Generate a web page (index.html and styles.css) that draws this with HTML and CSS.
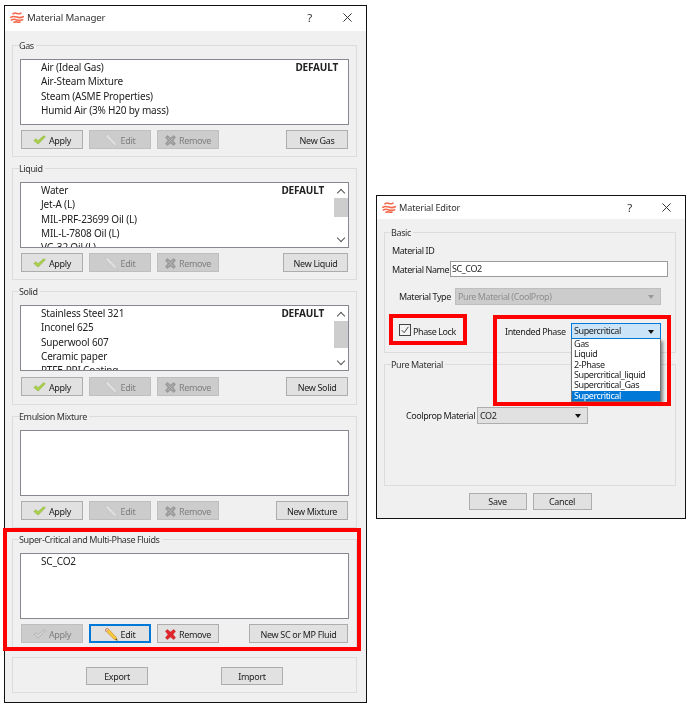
FILE: index.html
```html
<!DOCTYPE html>
<html lang="en">
<head>
<meta charset="utf-8">
<title>Material Manager</title>
<link rel="stylesheet" href="styles.css">
</head>
<body>
<svg class="defs" width="0" height="0" aria-hidden="true">
  <defs>
    <symbol id="logo" viewBox="0 0 14 11">
      <g fill="none" stroke="#f4694c" stroke-width="1.6" stroke-linecap="round">
        <path d="M3 1.8c1.5-1.2 2.5-1 4-.4s2.6.7 4-.3"/>
        <path d="M.8 5.3c2-1.3 3.6-1.1 6-.2s4 .8 6.4-.4"/>
        <path d="M1.4 8c1.8-1 3.4-.9 5.4-.1s3.8.6 5.8-.2"/>
        <path d="M4 10.2c1-.5 2-.4 3-.1s2 .3 3-.1"/>
      </g>
    </symbol>
    <symbol id="tick" viewBox="0 0 16 12">
      <path d="M1 6.5l2.8-2 2.4 2.4L13 .8l2.2 1.2L6.4 11z" fill="#a8d048" stroke="#8fb33a" stroke-width=".7"/>
    </symbol>
    <symbol id="tick-off" viewBox="0 0 16 12">
      <path d="M1 6.5l2.8-2 2.4 2.4L13 .8l2.2 1.2L6.4 11z" fill="#d2d2d2" stroke="#a8a8a8" stroke-width=".8"/>
    </symbol>
    <symbol id="pencil" viewBox="0 0 14 14">
      <path d="M1 1l2-.6 9 9.4 1.4 3.6-3.6-1.4L.6 3z" fill="#f7c83c" stroke="#c98a24" stroke-width=".6"/>
      <path d="M.6 3L1 1l2-.6 1 1-3 2.6z" fill="#e8e2da" stroke="#a33" stroke-width=".4"/>
      <path d="M12 11.4l1.4 2-2.2-.8z" fill="#333"/>
    </symbol>
    <symbol id="pencil-off" viewBox="0 0 14 14">
      <path d="M1 1l2-.6 9 9.4 1.4 3.6-3.6-1.4L.6 3z" fill="#dedede" stroke="#b4b4b4" stroke-width=".5"/>
    </symbol>
    <symbol id="cross" viewBox="0 0 12 12">
      <path d="M.5 2.5L2.5.5 6 3.2 9.5.5l2 2L8.8 6l2.7 3.5-2 2L6 8.8l-3.5 2.7-2-2L3.2 6z" fill="#e0262c" stroke="#c31e22" stroke-width=".5"/>
    </symbol>
    <symbol id="cross-off" viewBox="0 0 12 12">
      <path d="M.5 2.5L2.5.5 6 3.2 9.5.5l2 2L8.8 6l2.7 3.5-2 2L6 8.8l-3.5 2.7-2-2L3.2 6z" fill="#9c9c9c" stroke="#8a8a8a" stroke-width=".5"/>
      <path d="M3 3l6 6M9 3L3 9" stroke="#bdbdbd" stroke-width=".8"/>
    </symbol>
  </defs>
</svg>

<section class="window manager">
  <header class="titlebar">
    <svg class="logo"><use href="#logo"/></svg>
    <span class="title">Material Manager</span>
    <span class="help">?</span>
    <svg class="close" viewBox="0 0 10 10"><path d="M.5.5l9 9M9.5.5l-9 9"/></svg>
  </header>
  <div class="manager-body">
    <fieldset class="group">
      <legend>Gas</legend>
      <div class="list">
        <ul class="items">
          <li><span>Air (Ideal Gas)</span><b>DEFAULT</b></li>
          <li>Air-Steam Mixture</li>
          <li>Steam (ASME Properties)</li>
          <li>Humid Air (3% H20 by mass)</li>
        </ul>
      </div>
      <div class="actions">
        <button class="btn icon-btn"><svg class="i-tick"><use href="#tick"/></svg>Apply</button>
        <button class="btn icon-btn off"><svg class="i-pencil"><use href="#pencil-off"/></svg>Edit</button>
        <button class="btn icon-btn off"><svg class="i-cross"><use href="#cross-off"/></svg>Remove</button>
        <button class="btn new w-gas">New Gas</button>
      </div>
    </fieldset>
    <fieldset class="group">
      <legend>Liquid</legend>
      <div class="list">
        <ul class="items">
          <li><span>Water</span><b>DEFAULT</b></li>
          <li>Jet-A (L)</li>
          <li>MIL-PRF-23699 Oil (L)</li>
          <li>MIL-L-7808 Oil (L)</li>
          <li>VG-32 Oil (L)</li>
        </ul>
        <div class="scrollbar"><span class="arrow up"></span><span class="track"><span class="thumb thumb-liquid"></span></span><span class="arrow down"></span></div>
      </div>
      <div class="actions">
        <button class="btn icon-btn"><svg class="i-tick"><use href="#tick"/></svg>Apply</button>
        <button class="btn icon-btn off"><svg class="i-pencil"><use href="#pencil-off"/></svg>Edit</button>
        <button class="btn icon-btn off"><svg class="i-cross"><use href="#cross-off"/></svg>Remove</button>
        <button class="btn new w-liquid">New Liquid</button>
      </div>
    </fieldset>
    <fieldset class="group group-solid">
      <legend>Solid</legend>
      <div class="list">
        <ul class="items">
          <li><span>Stainless Steel 321</span><b>DEFAULT</b></li>
          <li>Inconel 625</li>
          <li>Superwool 607</li>
          <li>Ceramic paper</li>
          <li>PTFE-PPI Coating</li>
        </ul>
        <div class="scrollbar"><span class="arrow up"></span><span class="track"><span class="thumb thumb-solid"></span></span><span class="arrow down"></span></div>
      </div>
      <div class="actions">
        <button class="btn icon-btn"><svg class="i-tick"><use href="#tick"/></svg>Apply</button>
        <button class="btn icon-btn off"><svg class="i-pencil"><use href="#pencil-off"/></svg>Edit</button>
        <button class="btn icon-btn off"><svg class="i-cross"><use href="#cross-off"/></svg>Remove</button>
        <button class="btn new w-gas">New Solid</button>
      </div>
    </fieldset>
    <fieldset class="group">
      <legend>Emulsion Mixture</legend>
      <div class="list"><ul class="items"></ul></div>
      <div class="actions">
        <button class="btn icon-btn"><svg class="i-tick"><use href="#tick"/></svg>Apply</button>
        <button class="btn icon-btn off"><svg class="i-pencil"><use href="#pencil-off"/></svg>Edit</button>
        <button class="btn icon-btn off"><svg class="i-cross"><use href="#cross-off"/></svg>Remove</button>
        <button class="btn new w-mixture">New Mixture</button>
      </div>
    </fieldset>
    <fieldset class="group">
      <legend>Super-Critical and Multi-Phase Fluids</legend>
      <div class="list">
        <ul class="items"><li>SC_CO2</li></ul>
      </div>
      <div class="actions">
        <button class="btn icon-btn off"><svg class="i-tick"><use href="#tick-off"/></svg>Apply</button>
        <button class="btn icon-btn focus"><svg class="i-pencil"><use href="#pencil"/></svg>Edit</button>
        <button class="btn icon-btn"><svg class="i-cross"><use href="#cross"/></svg>Remove</button>
        <button class="btn new w-sc">New SC or MP Fluid</button>
      </div>
    </fieldset>
    <div class="io-panel">
      <button class="btn io">Export</button>
      <button class="btn io">Import</button>
    </div>
  </div>
</section>

<section class="window editor">
  <header class="titlebar titlebar-small">
    <svg class="logo"><use href="#logo"/></svg>
    <span class="title">Material Editor</span>
    <span class="help">?</span>
    <svg class="close" viewBox="0 0 10 10"><path d="M.5.5l9 9M9.5.5l-9 9"/></svg>
  </header>
  <div class="editor-body">
    <fieldset class="panel panel-basic">
      <legend>Basic</legend>
      <div class="row-id">Material ID</div>
      <div class="row-name">
        <label class="name-label">Material Name</label>
        <div class="input">SC_CO2</div>
      </div>
      <div class="row-type">
        <label class="type-label">Material Type</label>
        <div class="combo combo-off">Pure Material (CoolProp)<span class="caret"></span></div>
      </div>
      <div class="row-phase">
        <span class="checkbox"><svg viewBox="0 0 12 12"><path d="M2 6.2l3 3 5-7"/></svg></span>
        <span class="lock-label">Phase Lock</span>
        <label class="phase-label">Intended Phase</label>
        <div class="combo combo-open">Supercritical<span class="caret"></span>
          <ul class="dropdown">
            <li>Gas</li>
            <li>Liquid</li>
            <li>2-Phase</li>
            <li>Supercritical_liquid</li>
            <li>Supercritical_Gas</li>
            <li class="selected">Supercritical</li>
          </ul>
        </div>
      </div>
    </fieldset>
    <fieldset class="panel panel-pure">
      <legend>Pure Material</legend>
      <div class="row-cool">
        <label class="cool-label">Coolprop Material</label>
        <div class="combo combo-cool">CO2<span class="caret"></span></div>
      </div>
    </fieldset>
    <div class="dialog-actions">
      <button class="btn save">Save</button>
      <button class="btn cancel">Cancel</button>
    </div>
  </div>
</section>

<div class="mark mark-sc"></div>
<div class="mark mark-lock"></div>
<div class="mark mark-phase"></div>
</body>
</html>
```
FILE: styles.css
```css
* { box-sizing: border-box; }
html, body { margin: 0; padding: 0; }
body {
  width: 690px;
  height: 708px;
  position: relative;
  background: #fff;
  overflow: hidden;
  font-family: "Noto Sans", "Open Sans", sans-serif;
  font-size: 10px;
  letter-spacing: -.18px;
  color: #222;
}
.defs { position: absolute; }
ul { list-style: none; margin: 0; padding: 0; }
label, legend, .combo, .row-id, .lock-label { white-space: nowrap; }

.window {
  position: absolute;
  background: #f0f0f0;
  border: 1px solid #111;
  display: flex;
  flex-direction: column;
  filter: blur(.3px);
}
.manager { left: 4px; top: 5px; width: 363px; height: 698px; }
.editor { left: 376px; top: 195px; width: 310px; height: 324px; font-size: 9px; letter-spacing: -.42px; }

.titlebar {
  height: 25px;
  flex: none;
  background: #fff;
  display: flex;
  align-items: center;
  padding: 0 0 2px 5px;
  font-size: 9.7px;
  letter-spacing: -.18px;
}
.titlebar-small { height: 23px; padding-bottom: 1px; font-size: 9.2px; }
.logo { width: 14px; height: 11px; flex: none; margin-right: 3px; }
.title { flex: 1; color: #333; }
.help { font-size: 11.5px; color: #333; margin-right: 31px; }
.close { width: 9px; height: 9px; margin-right: 14px; flex: none; }
.close path { stroke: #333; stroke-width: 1.1; fill: none; }
.titlebar-small .help { margin-right: 30px; }

.manager-body {
  padding: 7px 9px 0 7px;
  display: flex;
  flex-direction: column;
  gap: 4px;
}
fieldset {
  margin: 0;
  min-width: 0;
  border: 1px solid #dcdcdc;
}
legend {
  padding: 0;
  height: 14px;
  line-height: 15px;
  font-size: 9px;
  letter-spacing: -.38px;
  color: #333;
}
.group { padding: 0 7px 7px; height: 119px; }
.group legend { margin-left: -1px; padding-right: 2px; }
.group-solid { height: 121px; }
.group-solid .actions { margin-top: 6px; }

.list {
  margin-top: 7px;
  height: 66px;
  background: #fff;
  border: 1px solid #85898f;
  display: flex;
  overflow: hidden;
}
.items { flex: 1; padding: 0 10px 0 20px; overflow: hidden; }
.items li {
  height: 14.35px;
  line-height: 14.35px;
  display: flex;
  justify-content: space-between;
  white-space: nowrap;
}
.items b { font-weight: 700; color: #222; }
.scrollbar {
  width: 14px;
  flex: none;
  display: flex;
  flex-direction: column;
  background: #fff;
}
.arrow { height: 15px; flex: none; position: relative; }
.arrow::after {
  content: "";
  position: absolute;
  left: 4px;
  width: 5px;
  height: 5px;
  border-left: 1px solid #555;
  border-top: 1px solid #555;
  transform: rotate(45deg);
}
.up::after { top: 7px; }
.down::after { top: 3px; transform: rotate(225deg); }
.track { flex: 1; display: block; }
.thumb { display: block; background: #cdcdcd; }
.thumb-liquid { height: 19px; }
.thumb-solid { height: 27px; }

.actions {
  margin-top: 5px;
  padding: 0 1px;
  display: flex;
  gap: 6px;
}
.btn {
  font-family: inherit;
  font-size: 9px;
  letter-spacing: -.33px;
  color: #222;
  background: #e1e1e1;
  border: 1px solid #adadad;
  padding: 1px 0 0;
  height: 19px;
  line-height: 15px;
  flex: none;
  display: flex;
  align-items: center;
  justify-content: center;
}
.icon-btn { width: 62px; gap: 3px; }
.off { background: #cccccc; border-color: #bfbfbf; color: #7e7e7e; }
.focus { border: 1px solid #0078d7; box-shadow: inset 0 0 0 1px #0078d7; }
.i-tick { width: 13px; height: 10px; }
.i-pencil { width: 13px; height: 13px; }
.i-cross { width: 11px; height: 11px; }
.new { margin-left: auto; }
.w-gas { width: 62px; }
.w-liquid { width: 65px; }
.w-mixture { width: 72px; }
.w-sc { width: 99px; }

.io-panel {
  margin-top: 2px;
  height: 36px;
  border: 1px solid #dcdcdc;
  padding: 9px 0 0 73px;
  display: flex;
  gap: 73px;
}
.io { width: 62px; height: 18px; }

.editor-body {
  padding: 6px 9px 0 7px;
  display: flex;
  flex-direction: column;
}
.panel { padding: 0 7px; }
.panel legend { padding-right: 2px; margin-left: -1px; line-height: 16px; }
.panel-basic { height: 128px; }
.panel-pure { height: 129px; margin-top: 4px; }

.row-id { margin-top: 5px; height: 14px; line-height: 14px; }
.row-name { margin-top: 3px; display: flex; align-items: center; }
.name-label { width: 58px; flex: none; }
.input {
  width: 218px;
  height: 16px;
  line-height: 14px;
  padding-left: 1px;
  background: #fff;
  border: 1px solid #9a9a9a;
}
.row-type { margin-top: 11px; padding-left: 7px; display: flex; align-items: center; }
.type-label { width: 56px; flex: none; }
.combo {
  position: relative;
  height: 17px;
  line-height: 15px;
  padding-left: 2px;
  border: 1px solid #adadad;
  background: #e1e1e1;
}
.combo-off { width: 206px; background: #ccc; border-color: #bfbfbf; color: #8f8f8f; }
.caret {
  position: absolute;
  right: 6px;
  top: 6px;
  width: 0;
  height: 0;
  border-left: 3.5px solid transparent;
  border-right: 3.5px solid transparent;
  border-top: 4px solid #111;
}
.combo-off .caret { border-top-color: #999; }
.row-phase { margin-top: 18px; padding-left: 7px; display: flex; align-items: center; }
.checkbox {
  width: 12px;
  height: 12px;
  flex: none;
  margin-bottom: 2px;
  border: 1px solid #444;
  background: #f4f4f4;
  display: block;
}
.checkbox svg { display: block; width: 10px; height: 10px; }
.checkbox path { fill: none; stroke: #333; stroke-width: 1.1; }
.lock-label { margin-left: 2px; width: 92px; flex: none; }
.phase-label { width: 66px; flex: none; }
.combo-open {
  width: 90px;
  height: 16px;
  line-height: 14px;
  background: #cce4f7;
  border-color: #0078d7;
}
.dropdown {
  position: absolute;
  left: -1px;
  top: 15px;
  width: 90px;
  padding-top: 0;
  background: #fff;
  border: 1px solid #767676;
  border-top: 0;
  box-shadow: 2px 2px 3px rgba(0,0,0,.45);
  color: #222;
}
.dropdown li { height: 10.35px; line-height: 10.35px; padding-left: 2px; }
.dropdown .selected { background: #0078d7; color: #fff; }
.row-cool { margin-top: 36px; padding-left: 14px; display: flex; align-items: center; }
.cool-label { width: 71px; flex: none; }
.combo-cool { width: 111px; }
.dialog-actions {
  margin-top: 7px;
  display: flex;
  justify-content: center;
  gap: 6px;
}
.save { width: 58px; height: 17px; padding: 0; }
.cancel { width: 59px; height: 17px; padding: 0; }

.mark { position: absolute; border: 4px solid #f00; }
.mark-sc { left: 3px; top: 528px; width: 358px; height: 123px; }
.mark-lock { left: 389px; top: 314px; width: 78px; height: 31px; }
.mark-phase { left: 493px; top: 315px; width: 178px; height: 91px; }
```
